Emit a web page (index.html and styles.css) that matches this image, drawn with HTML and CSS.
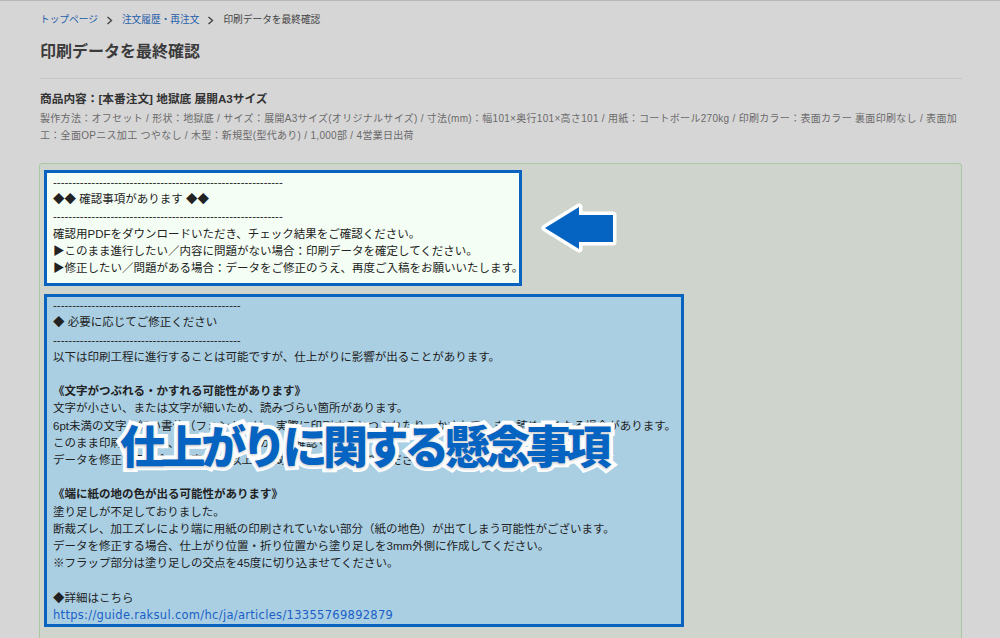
FILE: index.html
```html
<!DOCTYPE html>
<html lang="ja">
<head>
    <meta charset="UTF-8">
    <meta name="viewport" content="width=device-width, initial-scale=1.0">
    <title>印刷データを最終確認</title>
    <link rel="stylesheet" href="styles.css">
</head>
<body>
    <div class="page">
        <!-- パンくず -->
        <nav class="breadcrumb">
            <a href="#">トップページ</a>
            <svg class="chev" width="7" height="9" viewBox="0 0 7 9"><polyline points="1.5,1 5.5,4.5 1.5,8" fill="none" stroke="#444" stroke-width="1.4"/></svg>
            <a href="#">注文履歴・再注文</a>
            <svg class="chev" width="7" height="9" viewBox="0 0 7 9"><polyline points="1.5,1 5.5,4.5 1.5,8" fill="none" stroke="#444" stroke-width="1.4"/></svg>
            <span>印刷データを最終確認</span>
        </nav>

        <h1 class="title">印刷データを最終確認</h1>
        <hr class="rule">

        <h2 class="product">商品内容：[本番注文] 地獄底 展開A3サイズ</h2>
        <p class="details">製作方法：オフセット / 形状：地獄底 / サイズ：展開A3サイズ(オリジナルサイズ) / 寸法(mm)：幅101×奥行101×高さ101 / 用紙：コートボール270kg / 印刷カラー：表面カラー 裏面印刷なし / 表面加工：全面OPニス加工 つやなし / 木型：新規型(型代あり) / 1,000部 / 4営業日出荷</p>

        <div class="check-area">
            <div class="msg msg-confirm">
                <div>------------------------------------------------------------</div>
                <div>◆◆ 確認事項があります ◆◆</div>
                <div>------------------------------------------------------------</div>
                <div>確認用PDFをダウンロードいただき、チェック結果をご確認ください。</div>
                <div>▶このまま進行したい／内容に問題がない場合：印刷データを確定してください。</div>
                <div>▶修正したい／問題がある場合：データをご修正のうえ、再度ご入稿をお願いいたします。</div>
            </div>

            <div class="msg msg-notice">
                <div>-------------------------------------------------</div>
                <div>◆ 必要に応じてご修正ください</div>
                <div>-------------------------------------------------</div>
                <div>以下は印刷工程に進行することは可能ですが、仕上がりに影響が出ることがあります。</div>
                <div>&nbsp;</div>
                <div class="head">《文字がつぶれる・かすれる可能性があります》</div>
                <div>文字が小さい、または文字が細いため、読みづらい箇所があります。</div>
                <div>6pt未満の文字や細い書体（フォント）は、実際に印刷するとつぶれたり、かすれてしまい読めなくなる場合があります。</div>
                <div>このまま印刷する場合、問題なく読めるかをご確認ください。</div>
                <div>データを修正する場合、文字を6pt以上、太めの書体に変更してください。</div>
                <div>&nbsp;</div>
                <div class="head">《端に紙の地の色が出る可能性があります》</div>
                <div>塗り足しが不足しておりました。</div>
                <div>断裁ズレ、加工ズレにより端に用紙の印刷されていない部分（紙の地色）が出てしまう可能性がございます。</div>
                <div>データを修正する場合、仕上がり位置・折り位置から塗り足しを3mm外側に作成してください。</div>
                <div>※フラップ部分は塗り足しの交点を45度に切り込ませてください。</div>
                <div>&nbsp;</div>
                <div>◆詳細はこちら</div>
                <div><a href="#">https://guide.raksul.com/hc/ja/articles/13355769892879</a></div>
            </div>

            <!-- 注釈 -->
            <svg class="arrow" width="90" height="62" viewBox="0 0 90 62">
                <path d="M10 30 L44 9 L44 17 L78 17 L78 44 L44 44 L44 51 Z" fill="#0563c1" stroke="#fff" stroke-width="7" stroke-linejoin="round" paint-order="stroke"/>
            </svg>
            <div class="callout">仕上がりに関する懸念事項</div>
        </div>
    </div>
</body>
</html>
```

FILE: styles.css
```css
body {
    margin: 0;
    padding: 0;
    background-color: #d7d6d7;
    font-family: "Liberation Sans", "Noto Sans CJK JP", sans-serif;
    color: #333;
    border-top: 1px solid #b9b7b9;
    overflow: hidden;
}

.page {
    width: 922px;
    padding: 12px 38px 0 40px;
}

.breadcrumb {
    display: flex;
    align-items: center;
    gap: 6px;
    font-size: 9.7px;
    line-height: 14px;
    color: #444;
}

.breadcrumb a {
    color: #1f5fa9;
    text-decoration: none;
}

.chev {
    margin: 0 3px 0 2px;
}

.title {
    margin: 14px 0 0;
    font-size: 16px;
    line-height: 22px;
    font-weight: bold;
    color: #3b3b3b;
}

.rule {
    margin: 15px 0 0;
    border: none;
    border-top: 1px solid #c6c5c6;
}

.product {
    margin: 12px 0 0;
    font-size: 11.7px;
    line-height: 16px;
    font-weight: bold;
    color: #333;
}

.details {
    margin: 2.5px 0 0;
    font-size: 10px;
    line-height: 17px;
    letter-spacing: 0.3px;
    color: #6a6a6a;
}

.check-area {
    position: relative;
    margin-top: 19.5px;
    margin-left: -1px;
    height: 520px;
    padding: 6px 4px;
    background-color: #cfd4cc;
    border: 1px solid #a9c8a1;
    border-radius: 3px;
}

.msg {
    box-sizing: border-box;
    border: 3px solid #0b63c0;
    padding: 1px 6px 6px;
    font-size: 11.5px;
    line-height: 17.2px;
    color: #222;
    white-space: nowrap;
}

.msg-confirm {
    width: 478px;
    background-color: #f5fef5;
}

.msg-notice {
    width: 640px;
    margin-top: 8px;
    padding: 0 6px;
    background-color: #aacfe3;
}

.msg .head {
    font-weight: bold;
}

.msg a {
    font-family: "DejaVu Sans", sans-serif;
    letter-spacing: 0.3px;
    color: #1a5fc6;
    text-decoration: none;
}

.arrow {
    position: absolute;
    left: 495px;
    top: 34px;
}

.callout {
    position: absolute;
    left: 80px;
    top: 254px;
    font-family: "Noto Sans CJK JP", sans-serif;
    font-size: 45px;
    line-height: 54px;
    font-weight: 900;
    letter-spacing: -4.4px;
    color: #0563c1;
    -webkit-text-stroke: 8px #fff;
    paint-order: stroke fill;
    text-shadow: 0 1px 3px rgba(0, 0, 0, 0.25);
    white-space: nowrap;
}
```
